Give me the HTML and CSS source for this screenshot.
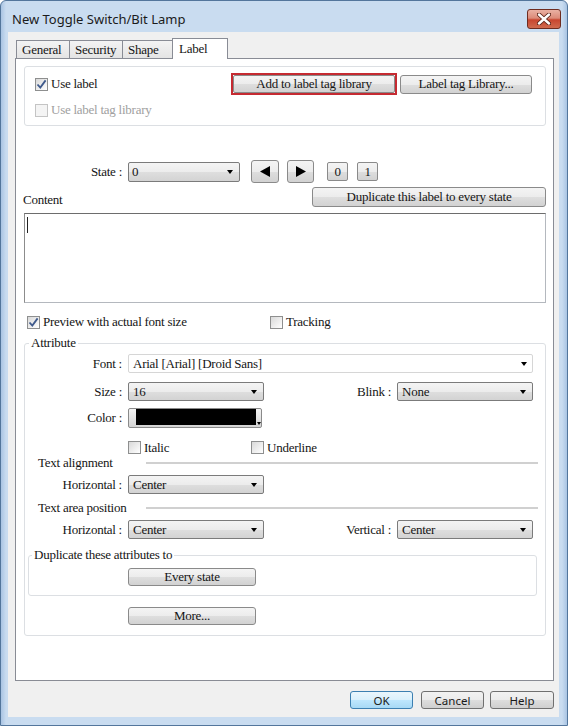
FILE: index.html
```html
<!DOCTYPE html>
<html lang="en">
<head>
    <meta charset="UTF-8">
    <title>New Toggle Switch/Bit Lamp</title>
    <link rel="stylesheet" href="styles.css">
</head>
<body>
    <div class="window">
        <div class="titlebar">
            <span class="title">New Toggle Switch/Bit Lamp</span>
            <span class="close">
                <svg width="14" height="12" viewBox="0 0 14 12">
                    <path d="M2 1.5L12 10.5M12 1.5L2 10.5" stroke="#5a2418" stroke-width="4.2" stroke-linecap="round"/>
                    <path d="M2 1.5L12 10.5M12 1.5L2 10.5" stroke="#fff" stroke-width="2.4" stroke-linecap="round"/>
                </svg>
            </span>
        </div>

        <div class="client">
            <div class="tabs">
                <span class="tab">General</span>
                <span class="tab">Security</span>
                <span class="tab">Shape</span>
                <span class="tab active">Label</span>
            </div>

            <div class="panel">
                <div class="group top-group">
                    <div class="row use-row">
                        <span class="check"><span class="cb checked"><svg width="11" height="11" viewBox="0 0 11 11"><path d="M1.5 5.5L4.3 8.6L9.6 1.4" fill="none" stroke="#3f5a8c" stroke-width="1.8"/></svg></span>Use label</span>
                        <span class="highlight"><span class="btn add-btn">Add to label tag library</span></span>
                        <span class="btn lib-btn">Label tag Library...</span>
                    </div>
                    <div class="row tag-row">
                        <span class="check disabled"><span class="cb"></span>Use label tag library</span>
                    </div>
                </div>

                <div class="row state-row">
                    <span class="lbl">State :</span>
                    <span class="combo state-combo"><span>0</span></span>
                    <span class="btn arrow-btn prev"><svg width="10" height="11" viewBox="0 0 10 11"><path d="M0 5.5L10 0V11Z"/></svg></span>
                    <span class="btn arrow-btn next"><svg width="10" height="11" viewBox="0 0 10 11"><path d="M10 5.5L0 0V11Z"/></svg></span>
                    <span class="btn num-btn first">0</span>
                    <span class="btn num-btn">1</span>
                </div>

                <div class="row content-row">
                    <span class="content-lbl">Content</span>
                    <span class="btn dup-btn">Duplicate this label to every state</span>
                </div>
                <div class="textbox"><span class="caret"></span></div>

                <div class="row preview-row">
                    <span class="check preview"><span class="cb checked"><svg width="11" height="11" viewBox="0 0 11 11"><path d="M1.5 5.5L4.3 8.6L9.6 1.4" fill="none" stroke="#3f5a8c" stroke-width="1.8"/></svg></span>Preview with actual font size</span>
                    <span class="check"><span class="cb"></span>Tracking</span>
                </div>

                <fieldset class="group attr">
                    <legend>Attribute</legend>
                    <div class="row font-row">
                        <span class="lbl">Font :</span>
                        <span class="combo plain font-combo"><span>Arial [Arial] [Droid Sans]</span></span>
                    </div>
                    <div class="row size-row">
                        <span class="lbl">Size :</span>
                        <span class="combo half"><span>16</span></span>
                        <span class="lbl right">Blink :</span>
                        <span class="combo half"><span>None</span></span>
                    </div>
                    <div class="row color-row">
                        <span class="lbl">Color :</span>
                        <span class="color-btn"><span class="swatch"></span><span class="mini-arrow"></span></span>
                    </div>
                    <div class="row style-row">
                        <span class="check italic"><span class="cb"></span>Italic</span>
                        <span class="check"><span class="cb"></span>Underline</span>
                    </div>
                    <div class="heading first-heading">
                        <span class="heading-text">Text alignment</span>
                        <span class="rule"></span>
                    </div>
                    <div class="row align-row">
                        <span class="lbl">Horizontal :</span>
                        <span class="combo half"><span>Center</span></span>
                    </div>
                    <div class="heading">
                        <span class="heading-text">Text area position</span>
                        <span class="rule"></span>
                    </div>
                    <div class="row align-row">
                        <span class="lbl">Horizontal :</span>
                        <span class="combo half"><span>Center</span></span>
                        <span class="lbl right">Vertical :</span>
                        <span class="combo half"><span>Center</span></span>
                    </div>
                    <fieldset class="group dup-group">
                        <legend>Duplicate these attributes to</legend>
                        <span class="btn wide-btn every">Every state</span>
                    </fieldset>
                    <span class="btn wide-btn more">More...</span>
                </fieldset>
            </div>

            <div class="actions">
                <span class="dlg-btn ok">OK</span>
                <span class="dlg-btn cancel">Cancel</span>
                <span class="dlg-btn help">Help</span>
            </div>
        </div>
    </div>
</body>
</html>
```

FILE: styles.css
```css
body {
    margin: 0;
    background: #ffffff;
    font-family: "Liberation Serif", "Times New Roman", serif;
    font-size: 13px;
    letter-spacing: -0.25px;
    color: #151515;
}
.window {
    width: 568px;
    height: 726px;
    box-sizing: border-box;
    display: flex;
    flex-direction: column;
    border: 1px solid #53769c;
    border-radius: 6px 6px 0 0;
    padding: 0 8px 8px 7px;
    background: linear-gradient(to right, #a9c4e3 0, #c9dcf0 5px, #c9dcf0 calc(100% - 5px), #a9c4e3 100%);
}
.titlebar {
    height: 31px;
    display: flex;
    justify-content: space-between;
    align-items: flex-start;
    margin: 0 -2px 0 -1px;
    padding: 0 0 0 5px;
}
.title {
    margin-top: 9px;
    font-family: "Noto Sans", sans-serif;
    font-size: 13px;
    letter-spacing: 0;
    line-height: 18px;
    color: #1b1b1b;
}
.close {
    margin-top: 8px;
    width: 34px;
    height: 20px;
    box-sizing: border-box;
    display: flex;
    justify-content: center;
    align-items: center;
    border: 1px solid #6e2c20;
    border-radius: 3px;
    background: linear-gradient(#eab1a3 0, #dc8b79 45%, #c8462f 55%, #cf6a4e 100%);
}

/* client area */
.client {
    flex: 1;
    display: flex;
    flex-direction: column;
    background: #f0f0f0;
    padding: 6px 5px 0 7px;
}
.tabs {
    display: flex;
    align-items: flex-end;
    padding-left: 1px;
    height: 21px;
    margin-bottom: -1px;
}
.tab {
    height: 18px;
    box-sizing: border-box;
    width: 54px;
    padding-left: 5px;
    line-height: 17px;
    border: 1px solid #898c95;
    border-bottom: none;
    margin-right: -1px;
    background: linear-gradient(#f3f3f3, #e4e4e4);
    margin-bottom: 1px;
}
.tab.active {
    position: relative;
    z-index: 1;
    height: 21px;
    width: 56px;
    margin-left: -3px;
    margin-bottom: 0;
    padding-left: 6px;
    line-height: 20px;
    background: #ffffff;
}
.panel {
    height: 623px;
    box-sizing: border-box;
    border: 1px solid #898c95;
    background: #ffffff;
    padding: 0 7px 0 8px;
    display: flex;
    flex-direction: column;
}
.row {
    display: flex;
    align-items: center;
}

/* group boxes */
.group {
    border: 1px solid #dcdfe3;
    border-radius: 3px;
    margin: 0;
    min-width: 0;
}
.group legend {
    padding: 0 2px;
    line-height: 14px;
}
.top-group {
    margin-top: 7px;
    height: 60px;
    box-sizing: border-box;
    padding: 6px 13px 0 10px;
}
.use-row {
    height: 22px;
}
.use-row .check {
    flex: 1;
}
.tag-row {
    margin-top: 8px;
    height: 14px;
}

/* check boxes */
.check {
    display: flex;
    align-items: center;
    line-height: 14px;
}
.cb {
    width: 13px;
    height: 13px;
    box-sizing: border-box;
    border: 1px solid #8e8f8f;
    background: linear-gradient(135deg, #d9d9d9, #ffffff);
    margin-right: 3px;
    display: flex;
    justify-content: center;
    align-items: center;
}
.check.disabled {
    color: #a0a0a0;
}
.check.disabled .cb {
    border-color: #c4c4c4;
    background: #f4f4f4;
}

/* buttons */
.btn {
    box-sizing: border-box;
    display: flex;
    justify-content: center;
    align-items: center;
    border: 1px solid #8a8a8a;
    border-radius: 3px;
    background: linear-gradient(#f4f4f4 0, #ececec 50%, #dedede 51%, #d2d2d2 100%);
    line-height: 14px;
}
.highlight {
    width: 166px;
    height: 22px;
    box-sizing: border-box;
    border: 2px solid #c52a31;
    display: flex;
}
.add-btn {
    flex: 1;
    border-radius: 2px;
}
.lib-btn {
    margin-left: 3px;
    width: 132px;
    height: 19px;
}

/* state */
.lbl {
    width: 97px;
    margin-right: 6px;
    text-align: right;
    white-space: nowrap;
}
.lbl.right {
    width: auto;
    flex: 1;
}
.state-row {
    margin-top: 34px;
    height: 23px;
}
.state-row .lbl {
    width: 98px;
}
.combo {
    box-sizing: border-box;
    height: 19px;
    display: flex;
    justify-content: space-between;
    align-items: center;
    padding: 0 6px 0 4px;
    border: 1px solid #7b7b7b;
    border-radius: 2px;
    background: linear-gradient(#f4f4f4 0, #ececec 50%, #dedede 51%, #d3d3d3 100%);
    line-height: 14px;
}
.combo::after {
    content: '';
    border-left: 3.5px solid transparent;
    border-right: 3.5px solid transparent;
    border-top: 4px solid #000;
}
.state-combo {
    width: 112px;
    height: 20px;
    padding-left: 3px;
}
.arrow-btn {
    width: 28px;
    height: 23px;
}
.arrow-btn.prev {
    margin-left: 11px;
}
.arrow-btn.next {
    width: 27px;
    margin-left: 8px;
}
.num-btn {
    width: 21px;
    height: 19px;
    margin-left: 9px;
    border-radius: 2px;
}
.num-btn.first {
    margin-left: 13px;
}

/* content */
.content-row {
    margin-top: 4px;
    height: 20px;
    justify-content: space-between;
    align-items: flex-end;
}
.content-lbl {
    margin-left: -1px;
    line-height: 14px;
}
.dup-btn {
    width: 234px;
    height: 20px;
}
.textbox {
    margin-top: 6px;
    height: 90px;
    box-sizing: border-box;
    border: 1px solid #b4b8be;
    border-top-color: #6d6d6d;
    border-left-color: #8c8c8c;
}
.caret {
    display: block;
    width: 1px;
    height: 16px;
    margin: 3px 0 0 2px;
    background: #222;
}
.preview-row {
    margin-top: 12px;
    height: 14px;
}
.check.preview {
    width: 243px;
    margin-left: 3px;
}

/* attribute */
.attr {
    margin-top: 7px;
    padding: 4px 12px 10px 0;
}
.attr > legend {
    margin-left: 4px;
}
.font-row {
    height: 19px;
}
.combo.plain {
    border-color: #d6d6d6;
    background: #ffffff;
}
.font-combo {
    flex: 1;
    padding-right: 5px;
}
.size-row {
    margin-top: 9px;
}
.combo.half {
    width: 136px;
}
.color-row {
    margin-top: 7px;
    height: 20px;
}
.color-btn {
    width: 134px;
    height: 20px;
    box-sizing: border-box;
    display: flex;
    align-items: flex-end;
    border: 1px solid #8a8a8a;
    border-radius: 2px;
    background: linear-gradient(#f4f4f4, #d4d4d4);
    padding: 0 0 2px 7px;
}
.swatch {
    width: 121px;
    height: 16px;
    background: #000;
}
.mini-arrow {
    margin: 0 0 0 1px;
    border-left: 2px solid transparent;
    border-right: 2px solid transparent;
    border-top: 3px solid #000;
}
.style-row {
    margin-top: 13px;
    height: 13px;
}
.check.italic {
    width: 123px;
    margin-left: 103px;
}
.heading {
    display: flex;
    align-items: center;
    margin-top: 7px;
    height: 14px;
    line-height: 14px;
    margin-right: -5px;
}
.heading.first-heading {
    margin-top: 2px;
}
.heading-text {
    width: 108px;
    margin-left: 13px;
    white-space: nowrap;
}
.rule {
    flex: 1;
    height: 2px;
    background: #d0d0d0;
}
.align-row {
    margin-top: 5px;
    height: 19px;
}
.dup-group {
    margin: 9px -4px 0 3px;
    padding: 6px 0 9px 0;
}
.dup-group > legend {
    margin-left: 3px;
}
.wide-btn {
    width: 128px;
    height: 18px;
}
.every {
    margin-left: 99px;
}
.more {
    margin: 11px 0 0 103px;
}

/* bottom buttons */
.actions {
    display: flex;
    justify-content: flex-end;
    margin-top: 10px;
}
.dlg-btn {
    width: 63px;
    height: 18px;
    box-sizing: border-box;
    display: flex;
    justify-content: center;
    align-items: center;
    border: 1px solid #707070;
    border-radius: 3px;
    background: linear-gradient(#f2f2f2 0, #ebebeb 50%, #dddddd 51%, #cfcfcf 100%);
    font-family: "Noto Sans", sans-serif;
    font-size: 11.5px;
    letter-spacing: 0;
    color: #1a1a1a;
}
.dlg-btn.ok {
    border-color: #3c7fb1;
    background: linear-gradient(#eaf6fd 0, #d9f0fc 50%, #bee6fd 51%, #a7d9f5 100%);
}
.dlg-btn.cancel {
    margin-left: 8px;
}
.dlg-btn.help {
    width: 64px;
    margin-left: 6px;
}
```
